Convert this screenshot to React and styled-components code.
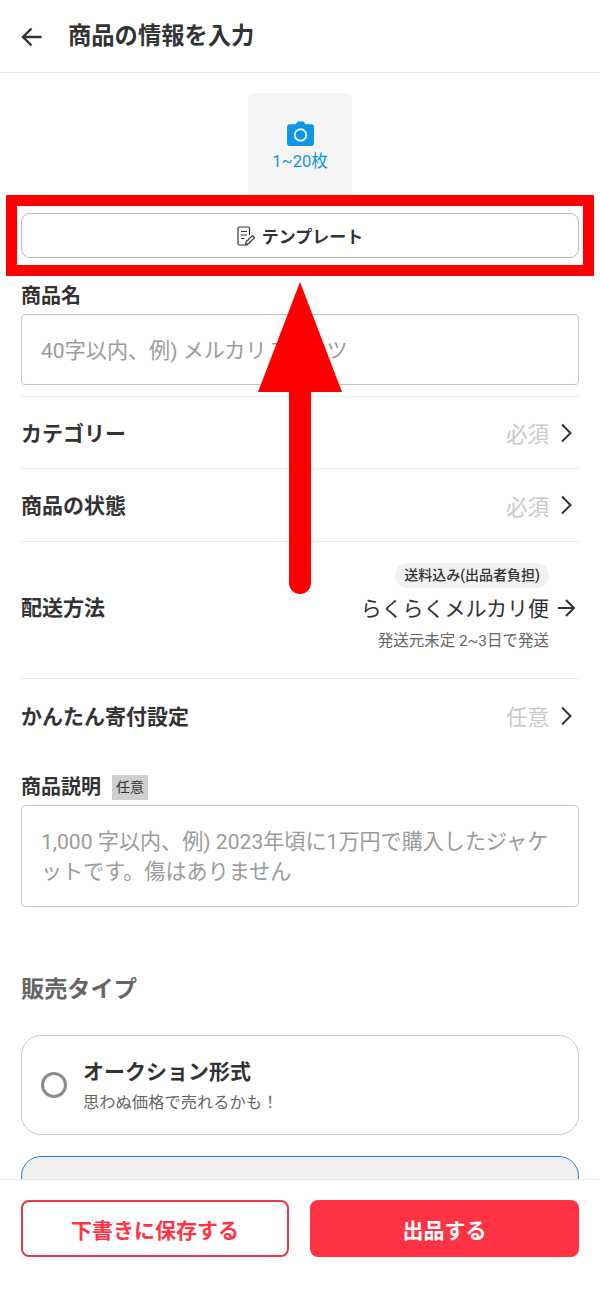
import React from 'react'
import styled, { createGlobalStyle } from 'styled-components'

const Global = createGlobalStyle`
html, body { margin: 0; padding: 0; background: #fff; }
body { font-family: Roboto, "Noto Sans CJK JP", sans-serif; color: #333; }
* { box-sizing: border-box; }
`

const Page = styled.div`
position: relative;
width: 600px;
height: 1292px;
display: flex;
flex-direction: column;
overflow: hidden;
background: #fff;
`
const Header = styled.header`
flex: none;
height: 73px;
display: flex;
align-items: center;
gap: 26px;
padding: 2px 21px 0;
border-bottom: 1.5px solid #e6e6e6;
h1 {
  margin: 0;
  font-size: 23.3px;
  font-weight: 700;
  color: #333;
  line-height: 1;
}
`
const Scroll = styled.main`
flex: 1;
min-height: 0;
overflow: hidden;
padding: 20px 21px 0;
`
const PhotoBox = styled.div`
width: 104px;
height: 110px;
margin: 0 auto 10px;
padding-top: 28px;
background: #f5f5f5;
border-radius: 5px;
display: flex;
flex-direction: column;
align-items: center;
color: #0f95e6;
font-size: 16.5px;
line-height: 20px;
svg { display: block; margin-bottom: 6px; }
`
const TemplateButton = styled.button`
width: 100%;
height: 45px;
display: flex;
align-items: center;
justify-content: center;
gap: 7px;
background: #fff;
border: 1.5px solid #bbb;
border-radius: 9px;
font: 700 17px Roboto, "Noto Sans CJK JP", sans-serif;
color: #333;
`
const Label = styled.div`
display: flex;
align-items: center;
gap: 11px;
height: 26px;
font-size: 20px;
font-weight: 700;
color: #333;
line-height: 26px;
margin-top: ${p => p.$top}px;
margin-bottom: 5px;
`
const OptionalTag = styled.span`
background: #cfcfcf;
color: #333;
font-size: 14px;
font-weight: 400;
line-height: 25px;
height: 25px;
padding: 0 4px;
`
const Field = styled.div`
height: ${p => p.$height}px;
padding: ${p => p.$pad}px 19px 0;
border: 1.5px solid #c4c4c4;
border-radius: 4px;
font-size: 21.1px;
line-height: ${p => p.$line}px;
color: #9b9b9b;
`
const Row = styled.div`
height: ${p => p.$height}px;
padding-bottom: ${p => p.$lift || 0}px;
display: flex;
align-items: center;
justify-content: space-between;
border-bottom: ${p => p.$last ? 'none' : '1.5px solid #e8e8e8'};
`
const RowTitle = styled.span`
font-size: 21px;
font-weight: 700;
color: #333;
padding-bottom: 2px;
`
const RowValue = styled.span`
display: flex;
align-items: center;
gap: 11px;
font-size: 21.5px;
color: #c9c9c9;
padding-right: 5px;
`
const FirstRows = styled.div`
margin-top: 11px;
border-top: 1.5px solid #e8e8e8;
`
const Shipping = styled.div`
display: flex;
flex-direction: column;
align-items: flex-end;
padding-right: 30px;
position: relative;
`
const Pill = styled.span`
height: 25px;
line-height: 25px;
padding: 0 9px;
border-radius: 13px;
background: #f1f1f1;
color: #333;
font-size: 14px;
font-weight: 500;
`
const ShipName = styled.span`
font-size: 21px;
line-height: 30px;
margin-top: 6px;
color: #333;
`
const ShipArrow = styled.span`
position: absolute;
right: 3px;
top: 36px;
line-height: 0;
`
const ShipNote = styled.span`
font-size: 15.5px;
line-height: 20px;
margin-top: 7px;
color: #666;
`
const SectionTitle = styled.h2`
margin: 65px 0 29px;
font-size: 23.2px;
line-height: 34px;
font-weight: 700;
color: #666;
`
const TypeCard = styled.div`
height: ${p => p.$height}px;
margin-bottom: 21px;
padding: 0 19px;
display: flex;
align-items: center;
gap: 16px;
border: 1.5px solid ${p => p.$active ? '#2b7cc4' : '#c8c8c8'};
background: ${p => p.$active ? '#efefef' : '#fff'};
border-radius: 20px;
`
const Radio = styled.span`
flex: none;
width: 26px;
height: 26px;
border: 3px solid #8c8c8c;
border-radius: 50%;
`
const TypeText = styled.div`
display: flex;
flex-direction: column;
padding-top: 2px;
strong { font-size: 21px; line-height: 30px; color: #333; font-weight: 700; }
span { font-size: 16.3px; line-height: 24px; color: #666; margin-top: 4px; }
`
const Footer = styled.footer`
flex: none;
height: 113px;
padding: 20px 21px 0;
display: grid;
grid-template-columns: 268px 269px;
justify-content: space-between;
align-items: start;
background: #fff;
border-top: 1px solid #e6e6e6;
`
const FootButton = styled.button`
height: 57px;
border-radius: 8px;
border: 2px solid ${p => p.$primary ? '#ff3344' : '#e8394a'};
background: ${p => p.$primary ? '#ff3344' : '#fff'};
color: ${p => p.$primary ? '#fff' : '#ff3344'};
font: 700 21px Roboto, "Noto Sans CJK JP", sans-serif;
`
/* annotation drawn over the screenshot */
const RedFrame = styled.div`
position: absolute;
left: 6px;
top: 195px;
width: 588px;
height: 81px;
border: 11px solid #ff0000;
pointer-events: none;
`
const RedArrow = styled.svg`
position: absolute;
left: 250px;
top: 276px;
`

const Chevron = () => (
  <svg width="14" height="20" viewBox="0 0 14 20" fill="none" stroke="#333" strokeWidth="2">
    <path d="M2 1.500l8.500 8.500-8.500 8.500" />
  </svg>
)

const BackArrow = () => (
  <svg width="21" height="20" viewBox="0 0 21 20" fill="none" stroke="#333" strokeWidth="2.400">
    <path d="M20.500 10H2M10.500 1.500L2 10l8.500 8.500" />
  </svg>
)

const ForwardArrow = () => (
  <svg width="18" height="18" viewBox="0 0 18 18" fill="none" stroke="#333" strokeWidth="2">
    <path d="M0 9h16M8 1l8 8-8 8" />
  </svg>
)

const Camera = () => (
  <svg width="27" height="25" viewBox="0 0 28 26">
    <path fill="#0f95e6" d="M9 3.500 10 1.500Q10.500 0.500 12 0.500h4Q17.500 0.500 18 1.500l1 2h6q3 0 3 3V23q0 3-3 3H3q-3 0-3-3V6.500q0-3 3-3z" />
    <circle cx="14" cy="14.500" r="6" fill="none" stroke="#e6f4fd" strokeWidth="2" />
  </svg>
)

const TemplateIcon = () => (
  <svg width="18" height="20" viewBox="0 0 18 20" fill="none" stroke="#333" strokeWidth="1.200">
    <path d="M11 19H2.500Q1 19 1 17.500V2.500Q1 1 2.500 1h8.500Q12.500 1 12.500 2.500V9" />
    <path d="M4 5.500h6M4 9h6M4 12.500h3.500" />
    <path d="M8.500 18.500l.8-3 6-6 2.200 2.200-6 6z" />
  </svg>
)

export default function App() {
  return <Page>
    <Global />
    <Header>
      <BackArrow />
      <h1>商品の情報を入力</h1>
    </Header>
    <Scroll>
      <PhotoBox>
        <Camera />
        <span>1~20枚</span>
      </PhotoBox>
      <TemplateButton><TemplateIcon />テンプレート</TemplateButton>
      <Label $top={25}>商品名</Label>
      <Field $height={71} $pad={19} $line={34}>40字以内、例) メルカリ Tシャツ</Field>
      <FirstRows>
        <Row $height={72}><RowTitle>カテゴリー</RowTitle><RowValue>必須<Chevron /></RowValue></Row>
        <Row $height={73}><RowTitle>商品の状態</RowTitle><RowValue>必須<Chevron /></RowValue></Row>
        <Row $height={137} $lift={7}>
          <RowTitle>配送方法</RowTitle>
          <Shipping>
            <Pill>送料込み(出品者負担)</Pill>
            <ShipName>らくらくメルカリ便</ShipName>
            <ShipArrow><ForwardArrow /></ShipArrow>
            <ShipNote>発送元未定 2~3日で発送</ShipNote>
          </Shipping>
        </Row>
        <Row $height={74} $lift={1} $last><RowTitle>かんたん寄付設定</RowTitle><RowValue>任意<Chevron /></RowValue></Row>
      </FirstRows>
      <Label $top={21}>商品説明<OptionalTag>任意</OptionalTag></Label>
      <Field $height={102} $pad={21} $line={30}>1,000 字以内、例) 2023年頃に1万円で購入したジャケ<br />ットです。傷はありません</Field>
      <SectionTitle>販売タイプ</SectionTitle>
      <TypeCard $height={100}>
        <Radio />
        <TypeText>
          <strong>オークション形式</strong>
          <span>思わぬ価格で売れるかも！</span>
        </TypeText>
      </TypeCard>
      <TypeCard $height={100} $active />
    </Scroll>
    <Footer>
      <FootButton>下書きに保存する</FootButton>
      <FootButton $primary>出品する</FootButton>
    </Footer>
    <RedFrame />
    <RedArrow width="100" height="324" viewBox="0 0 100 324">
      <path fill="#ff0000" d="M50 6 92 116H61V307a11 11 0 0 1-22 0V116H8z" />
    </RedArrow>
  </Page>
}
